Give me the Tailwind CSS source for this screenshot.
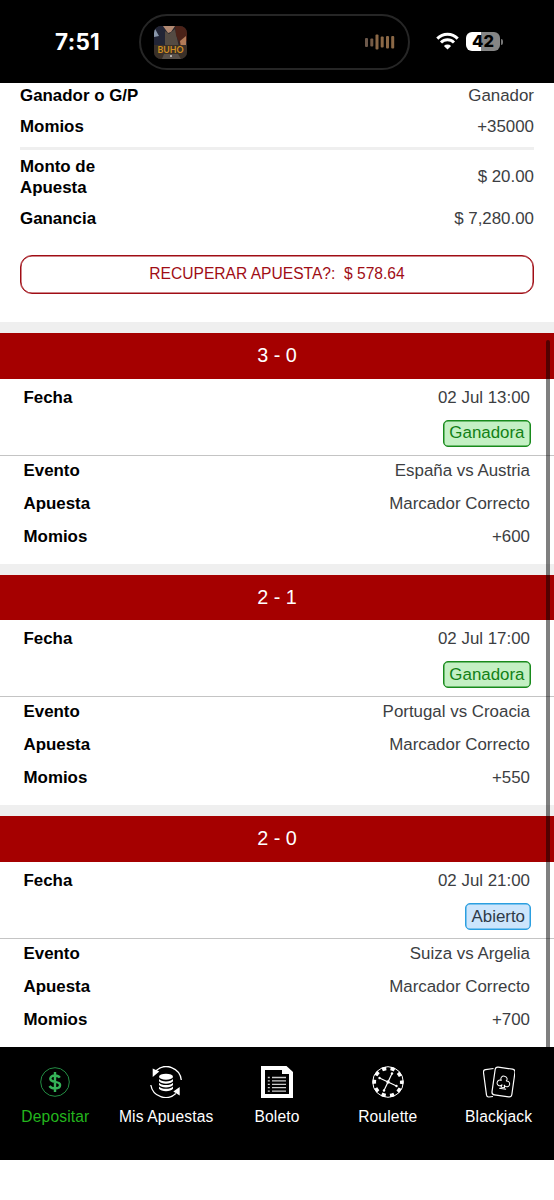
<!DOCTYPE html>
<html lang="es">
<head>
<meta charset="utf-8">
<title>Mis Apuestas</title>
<script src="https://cdn.jsdelivr.net/npm/@tailwindcss/browser@4"></script>
</head>
<body class="bg-white">
<div class="relative flex h-[1200px] w-[554px] flex-col overflow-hidden bg-white font-['Liberation_Sans',Arial,sans-serif] text-[16.9px] leading-[21px] text-[#3c3e42]">

  <header class="flex h-[83px] shrink-0 items-start bg-black pt-[14px] text-white">
    <div class="mt-[15px] w-[139px] pl-[55px] font-[Inter,sans-serif] text-[22.5px] leading-[26px] font-bold tracking-[0.3px]">7:51</div>
    <div class="flex h-[56px] w-[271px] items-center justify-between rounded-full border-2 border-[#262626] pr-[13px] pl-[13px]">
      <svg class="size-[33px]" viewBox="0 0 33 33">
        <defs><clipPath id="cover"><rect width="33" height="33" rx="7"/></clipPath></defs>
        <g clip-path="url(#cover)">
          <rect width="33" height="33" fill="#29272c"/>
          <path d="M0 0h10l4 11-1 11H0z" fill="#222536"/>
          <path d="M0 1l5 9-5 1z" fill="#8997ab"/>
          <path d="M9 0h12l-4 6-3 1z" fill="#b38a72"/>
          <path d="M11 5l4 3 6-5 4 18H11z" fill="#544b43"/>
          <path d="M21 0h12v15l-7 4-4-10z" fill="#4b2218"/>
          <path d="M26 15l6-5v11l-5 1z" fill="#b27b58"/>
          <path d="M0 19h33v14H0z" fill="#3a3028"/>
          <path d="M10 28h14l3 5H8z" fill="#58504a"/>
          <circle cx="17" cy="30" r="1" fill="#d8d2cc"/>
        </g>
        <text x="3.5" y="27" font-size="10" textLength="26" lengthAdjust="spacingAndGlyphs" font-family="Lato" font-weight="700" fill="#d08e22">BUHO</text>
      </svg>
      <svg class="h-[16px] w-[30px]" viewBox="0 0 30 16" fill="#8b6846">
        <rect x="0" y="4" width="3" height="9" rx="1" fill="#6d594b"/><rect x="5.300" y="4.500" width="3" height="8" rx="1" fill="#765b45"/><rect x="10.500" y="0.500" width="3" height="15" rx="1"/><rect x="15.700" y="2.500" width="3" height="11" rx="1"/><rect x="21" y="2" width="3" height="12.500" rx="1"/><rect x="26.200" y="2" width="3" height="12.500" rx="1"/>
      </svg>
    </div>
    <svg class="mt-[18px] ml-[26px] h-[18px] w-[23px]" viewBox="0 0 23 18" fill="none" stroke="white" stroke-width="3">
      <path d="M1.300 6.600a14.300 14.300 0 0 1 20.400 0"/><path d="M5 10.500a9.200 9.200 0 0 1 13 0"/><path d="M7.900 14a5.100 5.100 0 0 1 7.200 0l-3.600 3.500z" fill="white" stroke="none"/>
    </svg>
    <div class="mt-[18px] ml-[7px] flex items-center">
      <div class="flex h-[19px] w-[34px] items-center justify-center rounded-[6px] bg-linear-to-r from-white from-44% to-[#858585] to-44% font-[Inter,sans-serif] text-[16.5px] leading-none font-extrabold text-black">42</div>
      <div class="ml-[1px] h-[6px] w-[2px] rounded-r-full bg-[#777]"></div>
    </div>
  </header>

  <main class="flex h-[964px] shrink-0 flex-col overflow-hidden">
    <section class="flex h-[239px] shrink-0 flex-col px-[20px] pt-[2px]">
      <div class="flex h-[21px] justify-between"><b class="text-black">Ganador o G/P</b><span>Ganador</span></div>
      <div class="mt-[10px] flex h-[21px] justify-between"><b class="text-black">Momios</b><span>+35000</span></div>
      <div class="mt-[10px] h-[3px] bg-[#efefef]"></div>
      <div class="mt-[6px] flex h-[42px] items-center justify-between"><b class="w-[100px] text-black">Monto de Apuesta</b><span class="pb-px">$ 20.00</span></div>
      <div class="mt-[10px] flex h-[21px] justify-between"><b class="text-black">Ganancia</b><span>$ 7,280.00</span></div>
      <button class="mt-[26px] flex h-[39px] items-center justify-center rounded-[12px] border border-[#a00d15] pb-[2px] text-[15.6px] whitespace-pre text-[#a00d15] shadow-[inset_0_0_0_0.5px_#a00d15]">RECUPERAR APUESTA?:  $ 578.64</button>
    </section>

    <section class="h-[241.700px] shrink-0 border-t-[11px] border-[#efefef]">
      <h2 class="flex h-[45.500px] items-center justify-center bg-[#a50000] pb-px text-[19.800px] text-white">3 - 0</h2>
      <div class="flex h-[77px] justify-between border-b border-[#c4c4c4] pr-[24px] pl-[23.500px] pt-[8px]"><b class="text-black">Fecha</b>
        <div class="flex flex-col items-end"><span>02 Jul 13:00</span><span class="mt-[12px] -mr-px flex h-[27px] items-center rounded-[5px] border border-[#188a1c] bg-[#c4f0c4] px-[5.500px] pb-px text-[#128016] shadow-[inset_0_0_0_0.5px_#188a1c]">Ganadora</span></div></div>
      <div class="flex flex-col gap-[12px] pr-[24px] pl-[23.500px] pt-[4px]">
        <div class="flex justify-between"><b class="text-black">Evento</b><span>España vs Austria</span></div>
        <div class="flex justify-between"><b class="text-black">Apuesta</b><span>Marcador Correcto</span></div>
        <div class="flex justify-between"><b class="text-black">Momios</b><span>+600</span></div>
      </div>
    </section>

    <section class="h-[241.700px] shrink-0 border-t-[11px] border-[#efefef]">
      <h2 class="flex h-[45.500px] items-center justify-center bg-[#a50000] text-[19.800px] text-white">2 - 1</h2>
      <div class="flex h-[77px] justify-between border-b border-[#c4c4c4] pr-[24px] pl-[23.500px] pt-[8px]"><b class="text-black">Fecha</b>
        <div class="flex flex-col items-end"><span>02 Jul 17:00</span><span class="mt-[12px] -mr-px flex h-[27px] items-center rounded-[5px] border border-[#188a1c] bg-[#c4f0c4] px-[5.500px] text-[#128016] shadow-[inset_0_0_0_0.5px_#188a1c]">Ganadora</span></div></div>
      <div class="flex flex-col gap-[12px] pr-[24px] pl-[23.500px] pt-[4px]">
        <div class="flex justify-between"><b class="text-black">Evento</b><span>Portugal vs Croacia</span></div>
        <div class="flex justify-between"><b class="text-black">Apuesta</b><span>Marcador Correcto</span></div>
        <div class="flex justify-between"><b class="text-black">Momios</b><span>+550</span></div>
      </div>
    </section>

    <section class="h-[241.700px] shrink-0 border-t-[11px] border-[#efefef]">
      <h2 class="flex h-[45.500px] items-center justify-center bg-[#a50000] pb-px text-[19.800px] text-white">2 - 0</h2>
      <div class="flex h-[77px] justify-between border-b border-[#c4c4c4] pr-[24px] pl-[23.500px] pt-[8px]"><b class="text-black">Fecha</b>
        <div class="flex flex-col items-end"><span>02 Jul 21:00</span><span class="mt-[12px] -mr-px flex h-[27px] items-center rounded-[5px] border border-[#2b9fe0] bg-[#cce5fc] px-[5px] text-[#2e3a48] shadow-[inset_0_0_0_0.5px_#2b9fe0]">Abierto</span></div></div>
      <div class="flex flex-col gap-[12px] pr-[24px] pl-[23.500px] pt-[4px]">
        <div class="flex justify-between"><b class="text-black">Evento</b><span>Suiza vs Argelia</span></div>
        <div class="flex justify-between"><b class="text-black">Apuesta</b><span>Marcador Correcto</span></div>
        <div class="flex justify-between"><b class="text-black">Momios</b><span>+700</span></div>
      </div>
    </section>
  </main>
  <div class="absolute top-[340px] right-[4px] h-[707px] w-[4px] rounded-t-full bg-black/50"></div>

  <nav class="grid h-[113px] shrink-0 grid-cols-5 bg-black pt-[19px] text-[15.6px] leading-[20px] tracking-[0.15px] text-white">
    <div class="flex flex-col items-center gap-[9px] text-[#23b51d]">
      <svg class="size-[32px]" viewBox="0 0 32 32" fill="none"><circle cx="16" cy="16" r="14.300" stroke="#238c43" stroke-width="1"/><path d="M20.800 11.700c-1-1.500-2.600-2.200-4.800-2.200-2.800 0-4.700 1.300-4.700 3.300 0 4.600 9.800 1.600 9.800 6.300 0 2.100-2 3.400-5.100 3.400-2.400 0-4.400-.8-5.500-2.500M16 6v20" stroke="#35b258" stroke-width="2.400"/></svg>
      <span>Depositar</span>
    </div>
    <div class="flex flex-col items-center gap-[9px]">
      <svg class="size-[32px]" viewBox="0 0 32 32" fill="none" stroke="white" stroke-width="1.300"><path d="M6 4.800A15 15 0 0 1 31.300 14M.8 19a15 15 0 0 0 25 8.500"/><path d="M2.700 2.500v8.500l6.600-5.500zM29.700 21v8.500l-6.400-4z" fill="white" stroke="none"/><ellipse cx="16" cy="10.700" rx="7" ry="3" fill="white" stroke="none"/><path d="M9 13c2 3.200 12 3.200 14 0v2.300c-2 3.300-12 3.300-14 0zM9 16.700c2 3.200 12 3.200 14 0V19c-2 3.300-12 3.300-14 0zM9 20.400c2 3.200 12 3.200 14 0v2.300c-2 3.300-12 3.300-14 0z" fill="white" stroke="none"/></svg>
      <span>Mis Apuestas</span>
    </div>
    <div class="flex flex-col items-center gap-[9px]">
      <svg class="size-[32px]" viewBox="0 0 32 32"><path d="M0 0h25.500L32 6v26H0z" fill="white"/><path d="M4 4h17v4h7v20H4z" fill="black"/><path d="M6.800 11.500h2M6.800 14.900h2M6.800 18.300h2M6.800 21.700h2M6.800 25.100h2M11 11.500H25M11 14.900H25M11 18.300H25M11 21.700H25M11 25.100H25" stroke="#ccc" stroke-width="1.300"/></svg>
      <span>Boleto</span>
    </div>
    <div class="flex flex-col items-center gap-[9px]">
      <svg class="size-[32px]" viewBox="0 0 32 32" fill="none" stroke="white"><circle cx="16" cy="16" r="15.300" stroke-width="1"/><circle cx="16" cy="16" r="13.700" stroke-width="3.500" stroke-dasharray="4.200 4.408" stroke-dashoffset="2.100"/><path d="M7.500 12l17 8M20 7.500L12 24.500" stroke-width="1.200"/><g fill="white" stroke="none"><circle cx="7.500" cy="12" r="1.200"/><circle cx="24.500" cy="20" r="1.200"/><circle cx="20" cy="7.500" r="1.200"/><circle cx="12" cy="24.500" r="1.200"/><circle cx="16" cy="16" r="1.700"/></g></svg>
      <span>Roulette</span>
    </div>
    <div class="flex flex-col items-center gap-[9px]">
      <svg class="size-[32px]" viewBox="0 0 32 32" fill="none" stroke="white" stroke-width="1.200"><path d="M10.500 2.500L2.500 3.700Q.2 4 .5 6.500l3 22.500q.3 2.200 2.500 2l4-.5"/><rect x="-10" y="-14" width="20" height="28" rx="2.800" transform="translate(20.500 16) rotate(8)"/><g transform="translate(20.500 16.500) rotate(8)" stroke-width="1"><path d="M-1 2.300C-3 5-6.500 3.600-6.300.8-6.200-1.500-4-2.500-2.300-1.700-4.200-3.800-2.500-6.400 0-6.400S4.200-3.800 2.300-1.700C4-2.500 6.200-1.500 6.300.8 6.500 3.600 3 5 1 2.300L1.800 5h-3.600zM-3.500 6.300h7"/></g></svg>
      <span>Blackjack</span>
    </div>
  </nav>
</div>
</body>
</html>
